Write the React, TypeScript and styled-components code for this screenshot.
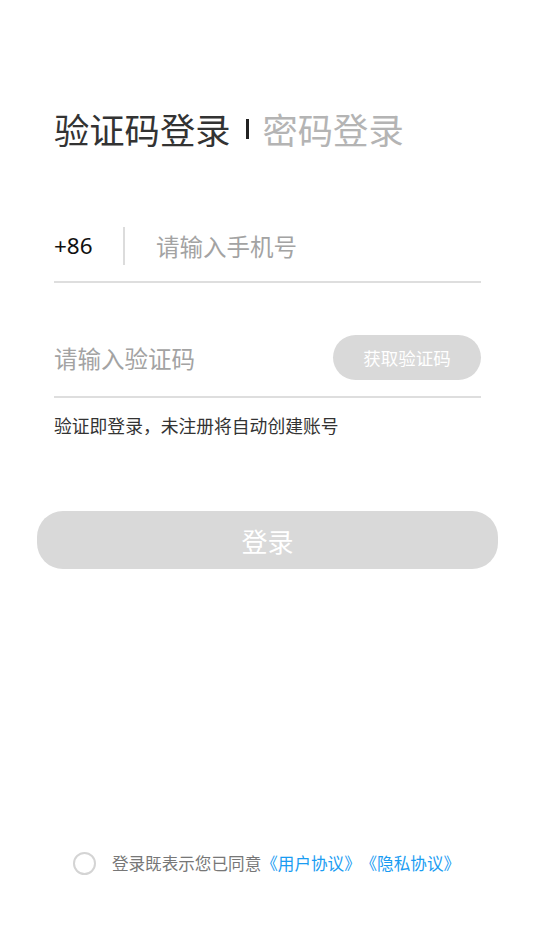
import React, { useState } from "react";
import styled, { createGlobalStyle } from "styled-components";

const GlobalStyle = createGlobalStyle`
  html, body {
    margin: 0;
    padding: 0;
    background: #ffffff;
  }
  body {
    font-family: "Noto Sans CJK SC", "Noto Sans", sans-serif;
  }
  * {
    box-sizing: border-box;
  }
`;

const Page = styled.div`
  min-height: 100vh;
  display: flex;
  flex-direction: column;
  padding: 0 54px 76px;
`;

const TitleRow = styled.div`
  display: flex;
  align-items: center;
  margin-top: 110px;
  height: 37px;
`;

const Tab = styled.span<{ $active?: boolean }>`
  font-size: 35.3px;
  line-height: 37px;
  color: ${(p) => (p.$active ? "#333333" : "#b4b4b4")};
`;

const TabDivider = styled.span`
  width: 3px;
  height: 20px;
  background: #222222;
  margin: 0 14px 0 15px;
`;

const Field = styled.div<{ $first?: boolean }>`
  display: flex;
  align-items: center;
  padding-bottom: 16px;
  border-bottom: 2px solid #dedede;
  margin-top: ${(p) => (p.$first ? "80px" : "52px")};
`;

const AreaCode = styled.span`
  font-family: "Noto Sans", sans-serif;
  font-size: 22.5px;
  line-height: 38px;
  color: #111111;
  width: 69px;
`;

const VDivider = styled.span`
  width: 2px;
  height: 38px;
  background: #dcdcdc;
  margin-right: 31px;
`;

const Input = styled.input<{ $height: number }>`
  flex: 1;
  min-width: 0;
  border: none;
  outline: none;
  padding: 0;
  background: transparent;
  font-family: "Noto Sans CJK SC", sans-serif;
  font-size: 23.5px;
  height: ${(p) => p.$height}px;
  color: #333;
  &::placeholder {
    color: #a3a3a3;
  }
`;

const CodeButton = styled.button`
  flex: none;
  width: 148px;
  height: 45px;
  border: none;
  border-radius: 23px;
  background: #d9d9d9;
  color: #ffffff;
  font-family: "Noto Sans CJK SC", sans-serif;
  font-size: 17.5px;
  padding: 0;
`;

const Hint = styled.p`
  margin: 15px 0 0;
  font-size: 17.8px;
  line-height: 24px;
  color: #333333;
`;

const LoginButton = styled.button`
  margin: 74px -17px 0;
  height: 58px;
  border: none;
  border-radius: 26px;
  background: #d9d9d9;
  color: #ffffff;
  font-family: "Noto Sans CJK SC", sans-serif;
  font-size: 26px;
  padding: 0;
`;

const Agreement = styled.div`
  margin-top: auto;
  display: flex;
  align-items: center;
  justify-content: center;
  height: 24px;
  padding-right: 2px;
`;

const Radio = styled.span<{ $checked: boolean }>`
  width: 23px;
  height: 23px;
  border-radius: 50%;
  border: 2px solid #d4d4d4;
  background: ${(p) => (p.$checked ? "#1a9cf2" : "#fff")};
  margin-right: 16px;
  cursor: pointer;
`;

const AgreeText = styled.span`
  font-size: 16.6px;
  line-height: 24px;
  color: #777777;
`;

const Link = styled.a<{ $gap?: number }>`
  color: #1a9cf2;
  text-decoration: none;
  margin-left: ${(p) => p.$gap ?? 0}px;
`;

export default function App() {
  const [checked, setChecked] = useState(false);
  return (
    <>
      <GlobalStyle />
      <Page>
        <TitleRow>
          <Tab $active>验证码登录</Tab>
          <TabDivider />
          <Tab>密码登录</Tab>
        </TitleRow>

        <Field $first>
          <AreaCode>+86</AreaCode>
          <VDivider />
          <Input $height={38} placeholder="请输入手机号" />
        </Field>

        <Field>
          <Input $height={45} placeholder="请输入验证码" />
          <CodeButton>获取验证码</CodeButton>
        </Field>

        <Hint>验证即登录，未注册将自动创建账号</Hint>

        <LoginButton>登录</LoginButton>

        <Agreement>
          <Radio $checked={checked} onClick={() => setChecked(!checked)} />
          <AgreeText>
            登录既表示您已同意<Link>《用户协议》</Link>
            <Link $gap={8}>《隐私协议》</Link>
          </AgreeText>
        </Agreement>
      </Page>
    </>
  );
}
